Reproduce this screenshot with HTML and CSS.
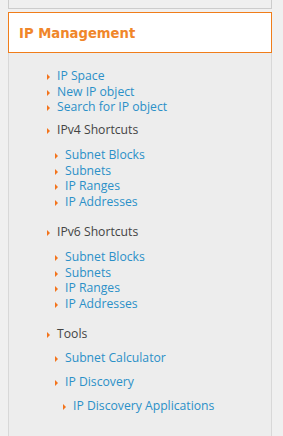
FILE: index.html
```html
<!DOCTYPE html>
<html>
<head>
    <title>IP Management</title>
    <link rel="stylesheet" href="styles.css">
</head>
<body>
    <div class="sidebar">
        <div class="prev-box"></div>

        <div class="panel-title">
            <h2>IP Management</h2>
        </div>

        <div class="panel-body">
            <ul class="menu">
                <li><a href="#">IP Space</a></li>
                <li><a href="#">New IP object</a></li>
                <li><a href="#">Search for IP object</a></li>

                <li class="group first">
                    <span class="label">IPv4 Shortcuts</span>
                    <ul class="sub">
                        <li><a href="#">Subnet Blocks</a></li>
                        <li><a href="#">Subnets</a></li>
                        <li><a href="#">IP Ranges</a></li>
                        <li><a href="#">IP Addresses</a></li>
                    </ul>
                </li>

                <li class="group">
                    <span class="label">IPv6 Shortcuts</span>
                    <ul class="sub">
                        <li><a href="#">Subnet Blocks</a></li>
                        <li><a href="#">Subnets</a></li>
                        <li><a href="#">IP Ranges</a></li>
                        <li><a href="#">IP Addresses</a></li>
                    </ul>
                </li>

                <li class="group">
                    <span class="label">Tools</span>
                    <ul class="sub tools">
                        <li><a href="#">Subnet Calculator</a></li>
                        <li>
                            <a href="#">IP Discovery</a>
                            <ul class="sub tools">
                                <li><a href="#">IP Discovery Applications</a></li>
                            </ul>
                        </li>
                    </ul>
                </li>
            </ul>
        </div>
    </div>
</body>
</html>
```

FILE: styles.css
```css
body {
    margin: 0;
    padding: 0;
    background-color: #f0f0f0;
    font-family: "Open Sans", Arial, sans-serif;
}

.sidebar {
    width: 264px;
    margin-left: 8px;
}

/* bottom of the panel above, cut off */
.prev-box {
    height: 8px;
    background-color: #efefef;
    border: 1px solid #cccccc;
    border-top: none;
    margin-bottom: 3px;
}

.panel-title {
    background-color: #fff;
    border: 1px solid #f07d1a;
    height: 39px;
    padding-left: 10px;
    display: flex;
    align-items: center;
}

.panel-title h2 {
    margin: 0;
    font-family: "DejaVu Sans", Verdana, sans-serif;
    font-size: 13.2px;
    font-weight: bold;
    color: #f0862a;
    padding-top: 1px;
}

.panel-body {
    background-color: #ededed;
    border-left: 1px solid #d8d8d8;
    border-right: 1px solid #d8d8d8;
    min-height: 368px;
    padding-top: 15px;
}

.menu,
.menu ul {
    list-style: none;
    margin: 0;
    padding: 0;
}

.menu {
    padding-left: 38px;
    font-size: 12.2px;
    line-height: 15.5px;
}

.menu a::before,
.menu .label::before {
    content: "";
    display: inline-block;
    width: 0;
    height: 0;
    border-left: 3px solid #f3741c;
    border-top: 3px solid transparent;
    border-bottom: 3px solid transparent;
    margin-right: 7px;
    vertical-align: 0;
}

.menu a {
    color: #2b90c8;
    text-decoration: none;
}

.menu .label {
    color: #444;
}

.menu .group.first {
    margin-top: 7.5px;
}

.menu .group {
    margin-top: 15px;
}

.menu .sub {
    padding-left: 8px;
    margin-top: 9.5px;
}

.menu .tools {
    margin-top: 0;
}

.menu .tools li {
    margin-top: 8.5px;
}
```
